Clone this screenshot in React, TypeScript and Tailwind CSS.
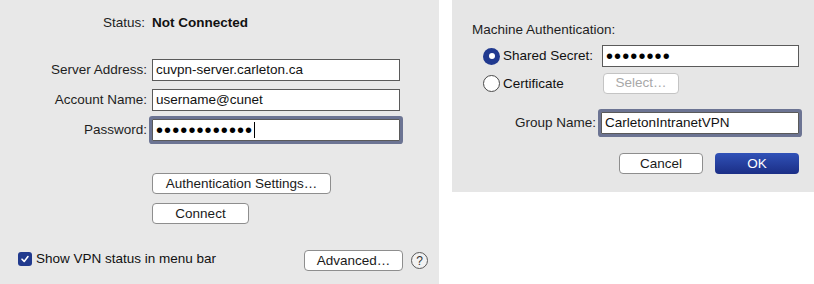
import React from "react";

const font = { fontFamily: '"Liberation Sans", Arial, sans-serif' };

function Btn({ children, className = "", disabled = false }: { children: React.ReactNode; className?: string; disabled?: boolean }) {
  return (
    <div
      className={
        "flex h-[21px] shrink-0 items-center justify-center rounded-[4px] border bg-white text-[13.5px] leading-none " +
        (disabled ? "border-[#c4c4c4] bg-[#f0f0f0] text-[#a8a8a8] " : "border-[#8e8e8e] text-[#1a1a1a] ") +
        className
      }
    >
      {children}
    </div>
  );
}

function Field({ children, focused = false, className = "" }: { children: React.ReactNode; focused?: boolean; className?: string }) {
  return (
    <div
      className={
        "flex h-[22px] shrink-0 items-center border border-[#5a5a5a] bg-white pl-[3px] text-[13.5px] text-[#111] " +
        (focused ? "rounded-[1px] ring-[3px] ring-[#6c7493] " : "") +
        className
      }
    >
      {children}
    </div>
  );
}

function Dots({ n }: { n: number }) {
  return (
    <span className="text-[20px] leading-none tracking-[1.1px] text-black">{"•".repeat(n)}</span>
  );
}

export default function App() {
  return (
    <div className="flex min-h-[284px] w-[814px] items-start gap-[13px] bg-white text-[#1e1e1e]" style={font}>
      {/* Left panel */}
      <div className="flex h-[284px] w-[439px] shrink-0 flex-col bg-[#e8e8e8]">
        <div className="mt-[12px] flex h-[22px] shrink-0 items-center">
          <div className="w-[145px] text-right text-[13.5px]">Status:</div>
          <div className="ml-[7px] text-[13.5px] font-bold text-[#111]">Not Connected</div>
        </div>

        <div className="mt-[25px] flex shrink-0 flex-col gap-[8px]">
          <div className="flex items-center">
            <div className="w-[147px] text-right text-[13.5px]">Server Address:</div>
            <Field className="ml-[5px] w-[248px]">cuvpn-server.carleton.ca</Field>
          </div>
          <div className="flex items-center">
            <div className="w-[147px] text-right text-[13.5px]">Account Name:</div>
            <Field className="ml-[5px] w-[248px]">username@cunet</Field>
          </div>
          <div className="flex items-center">
            <div className="w-[147px] text-right text-[13.5px]">Password:</div>
            <Field focused className="ml-[5px] w-[248px]">
              <Dots n={12} />
              <span className="ml-[1px] h-[16px] w-[1px] bg-black" />
            </Field>
          </div>
        </div>

        <div className="ml-[152px] mt-[32px] flex shrink-0 flex-col gap-[9px]">
          <Btn className="w-[179px]">Authentication Settings…</Btn>
          <Btn className="w-[97px]">Connect</Btn>
        </div>

        <div className="mr-[11px] mt-[23px] flex shrink-0 items-center">
          <div className="ml-[18px] flex h-[14px] w-[14px] shrink-0 items-center justify-center rounded-[3px] bg-[#213a8e]">
            <svg width="10" height="10" viewBox="0 0 10 10">
              <path d="M2 5.2 L4.2 7.4 L8 2.6" fill="none" stroke="white" strokeWidth="1.6" strokeLinecap="round" strokeLinejoin="round" />
            </svg>
          </div>
          <div className="ml-[4px] whitespace-nowrap text-[13.5px] text-[#111]">Show VPN status in menu bar</div>
          <div className="flex-1" />
          <Btn className="mt-[3px] w-[99px]">Advanced…</Btn>
          <div className="ml-[8px] mt-[3px] flex h-[17px] w-[17px] shrink-0 items-center justify-center rounded-full border border-[#5a5a5a] bg-[#f2f2f2] text-[12px] leading-none text-[#333]">
            ?
          </div>
        </div>
      </div>

      {/* Right panel */}
      <div className="flex h-[192px] w-[362px] shrink-0 flex-col bg-[#e6e6e6]">
        <div className="ml-[20px] mt-[22px] text-[13.5px] leading-[16px]">Machine Authentication:</div>

        <div className="ml-[31px] mt-[7px] flex items-center">
          <div className="flex w-[119px] items-center">
            <div className="flex h-[17px] w-[17px] items-center justify-center rounded-full bg-[#20398f]">
              <div className="h-[6px] w-[6px] rounded-full bg-white" />
            </div>
            <div className="ml-[3px] text-[13.5px] text-[#111]">Shared Secret:</div>
          </div>
          <Field className="w-[197px]">
            <Dots n={8} />
          </Field>
        </div>

        <div className="ml-[31px] mt-[5px] flex items-center">
          <div className="flex w-[120px] items-center">
            <div className="h-[17px] w-[17px] rounded-full border border-[#4a4a4a] bg-white" />
            <div className="ml-[3px] mt-[2px] text-[13.5px] text-[#111]">Certificate</div>
          </div>
          <Btn disabled className="w-[76px]">Select…</Btn>
        </div>

        <div className="mt-[18px] flex items-center">
          <div className="w-[144px] text-right text-[13.5px]">Group Name:</div>
          <Field focused className="ml-[5px] w-[198px]">CarletonIntranetVPN</Field>
        </div>

        <div className="ml-[167px] mt-[19px] flex gap-[12px]">
          <Btn className="w-[84px]">Cancel</Btn>
          <div className="flex h-[21px] w-[84px] items-center justify-center rounded-[4px] bg-gradient-to-b from-[#3152b8] to-[#1b2e86] text-[13.5px] leading-none text-white">
            OK
          </div>
        </div>
      </div>
    </div>
  );
}
